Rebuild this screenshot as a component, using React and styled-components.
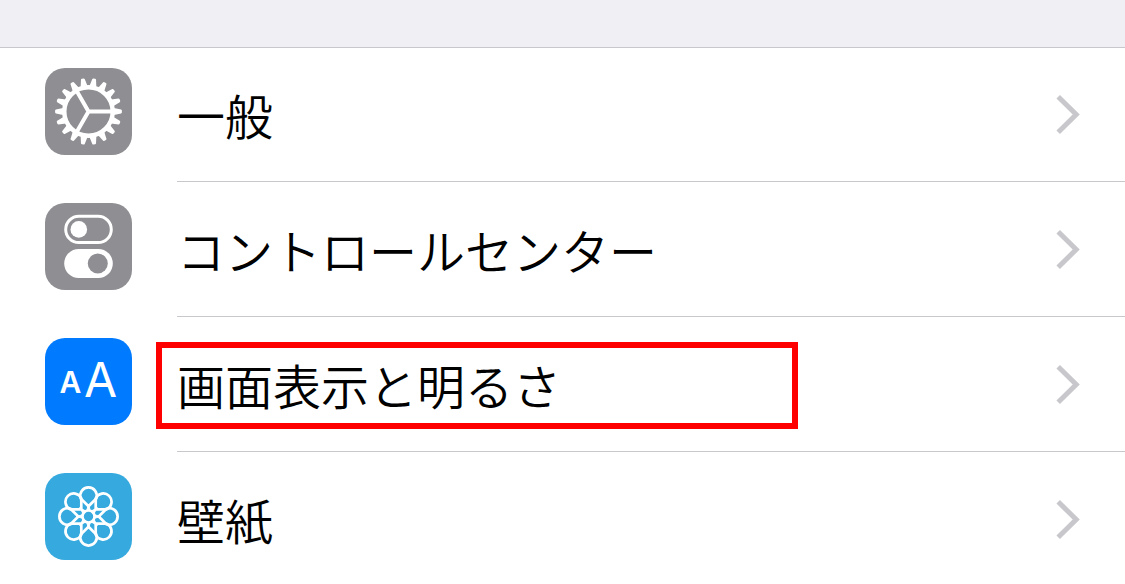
import React from 'react'
import styled, { createGlobalStyle } from 'styled-components'


const GlobalStyle = createGlobalStyle`
    * {
        box-sizing: border-box;
    }

    body {
        margin: 0;
        background: #FFFFFF;
        font-family: "Noto Sans CJK JP", sans-serif;
    }
`;

const Page = styled.main`
    height: 100vh;
    overflow: hidden;
    background: #FFFFFF;
`;

const GroupGap = styled.div`
    height: 47px;
    background: #EFEFF4;
`;

const List = styled.ul`
    margin: 0;
    padding: 0;
    list-style: none;
    box-shadow: inset 0 1px 0 #C8C7CC;
`;

const Row = styled.a`
    display: flex;
    gap: 45px;
    padding-left: 45px;
    color: #000000;
    text-decoration: none;
`;

const Tile = styled.span`
    flex: none;
    width: 87px;
    height: 87px;
    margin: 21px 0 27px;
    border-radius: 20px;
    overflow: hidden;
    background: ${(props) => props.$color};

    svg {
        display: block;
    }
`;

const Body = styled.span`
    position: relative;
    flex: 1;
    display: flex;
    align-items: center;
    justify-content: space-between;
    padding-right: 45px;
    border-bottom: 1px solid #C8C7CC;
`;

const Label = styled.span`
    font-size: 48px;
    font-weight: 350;
    line-height: 72px;
`;

/* frame drawn over the row to point it out */
const Highlight = styled.span`
    position: absolute;
    top: 25px;
    left: -21px;
    width: 642px;
    height: 87px;
    border: 6px solid #FF0000;
    pointer-events: none;
`;

const Glyph = styled.text`
    font-family: Inter, sans-serif;
    font-size: ${(props) => props.$size};
    font-weight: ${(props) => props.$weight};
    fill: #FFFFFF;
`;


const teeth = Array.from({ length: 18 }, (_, i) => i * 20);
const petals = Array.from({ length: 8 }, (_, i) => i * 45);

const GearIcon = () => {
    return (
        <svg width="87" height="87" viewBox="0 0 87 87" aria-hidden="true">
            <g transform="translate(43.5 43.5)" fill="none" stroke="#fff">
                <circle r="24.2" strokeWidth="4.4" />
                {teeth.map((angle) => (
                    <path
                        key={angle}
                        transform={`rotate(${angle})`}
                        d="M25.4 -3.5L32.6 -1.9Q33.4 -1.6 33.4 -.8V.8Q33.4 1.6 32.6 1.9L25.4 3.5Z"
                        fill="#fff"
                        stroke="none"
                    />
                ))}
                <path d="M0 0H23M0 0L-11.5 -19.9M0 0L-11.5 19.9" strokeWidth="4" />
            </g>
        </svg>
    );
}

const TogglesIcon = () => {
    return (
        <svg width="87" height="87" viewBox="0 0 87 87" aria-hidden="true">
            <rect x="20.7" y="13.2" width="45.6" height="26.4" rx="13.2" fill="none" stroke="#fff" strokeWidth="3" />
            <circle cx="33.8" cy="26.4" r="8.3" fill="#fff" />
            <rect x="19.2" y="46" width="48.6" height="29" rx="14.5" fill="#fff" />
            <circle cx="52.8" cy="60.5" r="10" fill="#8E8E93" />
        </svg>
    );
}

const TextSizeIcon = () => {
    return (
        <svg width="87" height="87" viewBox="0 0 87 87" aria-hidden="true">
            <Glyph x="25.5" y="55" textAnchor="middle" $size="30px" $weight="600">A</Glyph>
            <Glyph x="55.5" y="59" textAnchor="middle" $size="48px" $weight="400">A</Glyph>
        </svg>
    );
}

const FlowerIcon = () => {
    return (
        <svg width="87" height="87" viewBox="0 0 87 87" aria-hidden="true">
            <g transform="translate(43.5 43.5)" fill="none" stroke="#fff" strokeWidth="2.7">
                {petals.map((angle) => (
                    <g key={angle} transform={`rotate(${angle})`}>
                        <path d="M0 -10.2L-7.8 -18A8.3 8.3 0 1 1 7.8 -18Z" />
                        <path d="M-1.8 -6L0 -12L1.8 -6Z" fill="#fff" strokeWidth="1" />
                    </g>
                ))}
                <circle r="6" strokeWidth="2.6" />
            </g>
        </svg>
    );
}

const Chevron = () => {
    return (
        <svg width="24" height="39" viewBox="0 0 24 39" aria-hidden="true">
            <path d="M2.2 1.8L20.2 19.5L2.2 37.2" fill="none" stroke="#C7C7CC" strokeWidth="5" />
        </svg>
    );
}

const items = [
    { id: 'general', label: '一般', color: '#8E8E93', Icon: GearIcon },
    { id: 'control-center', label: 'コントロールセンター', color: '#8E8E93', Icon: TogglesIcon },
    { id: 'display', label: '画面表示と明るさ', color: '#007AFF', Icon: TextSizeIcon, highlighted: true },
    { id: 'wallpaper', label: '壁紙', color: '#36A9DE', Icon: FlowerIcon },
];


export const App = () => {
    return (
        <Page lang="ja">
            <GlobalStyle />
            <GroupGap />
            <List>
                {items.map(({ id, label, color, Icon, highlighted }) => (
                    <li key={id}>
                        <Row href={`#${id}`}>
                            <Tile $color={color}>
                                <Icon />
                            </Tile>
                            <Body>
                                <Label>{label}</Label>
                                <Chevron />
                                {highlighted && <Highlight />}
                            </Body>
                        </Row>
                    </li>
                ))}
            </List>
        </Page>
    );
}


export default App;
